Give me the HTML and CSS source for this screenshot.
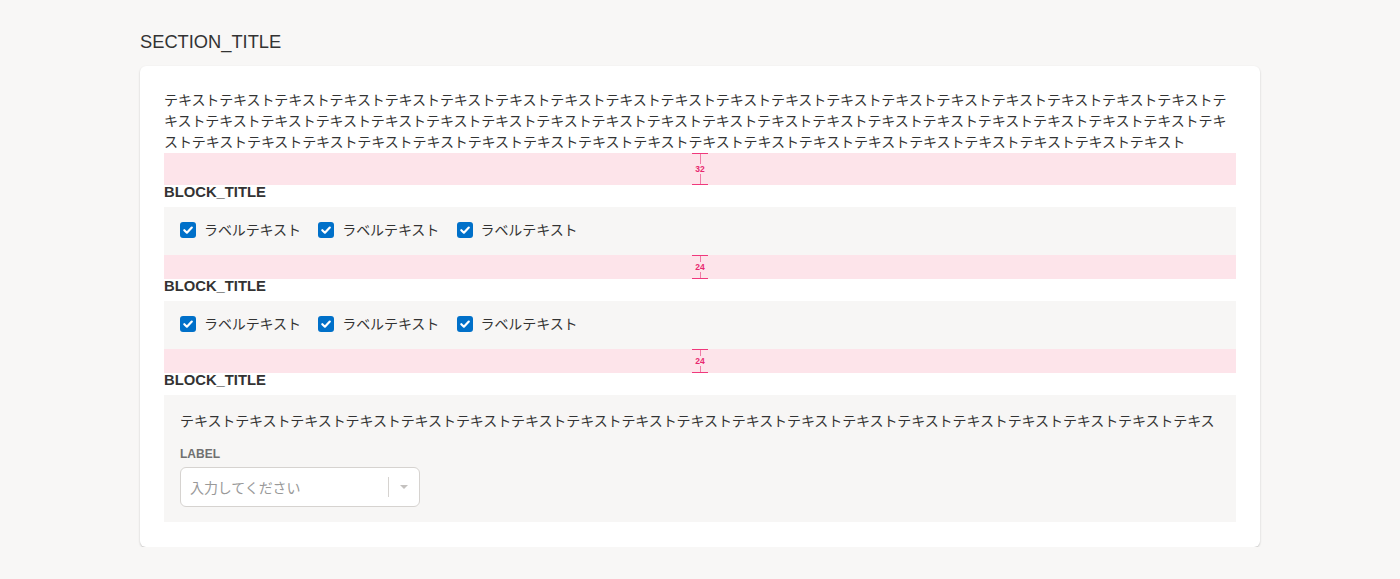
FILE: index.html
```html
<!DOCTYPE html>
<html lang="ja">
<head>
<meta charset="utf-8">
<link rel="stylesheet" href="styles.css">
</head>
<body>
<div class="page">
  <h2 class="section-title">SECTION_TITLE</h2>
  <div class="card">
    <p class="lead">テキストテキストテキストテキストテキストテキストテキストテキストテキストテキストテキストテキストテキストテキストテキストテキストテキストテキストテキストテキストテキストテキストテキストテキストテキストテキストテキストテキストテキストテキストテキストテキストテキストテキストテキストテキストテキストテキストテキストテキストテキストテキストテキストテキストテキストテキストテキストテキストテキストテキストテキストテキストテキストテキストテキストテキストテキスト</p>

    <div class="spacer s32"><div class="marker"><span class="cap"></span><span class="line"></span><span class="num">32</span><span class="line"></span><span class="cap"></span></div></div>
    <h3 class="block-title">BLOCK_TITLE</h3>
    <div class="block checks-block">
      <div class="checks">
        <label class="check"><span class="box"><svg viewBox="0 0 16 16" width="16" height="16"><path d="M4.3 8.2 L6.9 10.7 L11.8 5.6" fill="none" stroke="#fff" stroke-width="2.2" stroke-linecap="round" stroke-linejoin="round"/></svg></span><span class="ltext">ラベルテキスト</span></label>
        <label class="check"><span class="box"><svg viewBox="0 0 16 16" width="16" height="16"><path d="M4.3 8.2 L6.9 10.7 L11.8 5.6" fill="none" stroke="#fff" stroke-width="2.2" stroke-linecap="round" stroke-linejoin="round"/></svg></span><span class="ltext">ラベルテキスト</span></label>
        <label class="check"><span class="box"><svg viewBox="0 0 16 16" width="16" height="16"><path d="M4.3 8.2 L6.9 10.7 L11.8 5.6" fill="none" stroke="#fff" stroke-width="2.2" stroke-linecap="round" stroke-linejoin="round"/></svg></span><span class="ltext">ラベルテキスト</span></label>
      </div>
    </div>

    <div class="spacer s24"><div class="marker"><span class="cap"></span><span class="line"></span><span class="num">24</span><span class="line"></span><span class="cap"></span></div></div>
    <h3 class="block-title">BLOCK_TITLE</h3>
    <div class="block checks-block">
      <div class="checks">
        <label class="check"><span class="box"><svg viewBox="0 0 16 16" width="16" height="16"><path d="M4.3 8.2 L6.9 10.7 L11.8 5.6" fill="none" stroke="#fff" stroke-width="2.2" stroke-linecap="round" stroke-linejoin="round"/></svg></span><span class="ltext">ラベルテキスト</span></label>
        <label class="check"><span class="box"><svg viewBox="0 0 16 16" width="16" height="16"><path d="M4.3 8.2 L6.9 10.7 L11.8 5.6" fill="none" stroke="#fff" stroke-width="2.2" stroke-linecap="round" stroke-linejoin="round"/></svg></span><span class="ltext">ラベルテキスト</span></label>
        <label class="check"><span class="box"><svg viewBox="0 0 16 16" width="16" height="16"><path d="M4.3 8.2 L6.9 10.7 L11.8 5.6" fill="none" stroke="#fff" stroke-width="2.2" stroke-linecap="round" stroke-linejoin="round"/></svg></span><span class="ltext">ラベルテキスト</span></label>
      </div>
    </div>

    <div class="spacer s24"><div class="marker"><span class="cap"></span><span class="line"></span><span class="num">24</span><span class="line"></span><span class="cap"></span></div></div>
    <h3 class="block-title">BLOCK_TITLE</h3>
    <div class="block form-block">
      <p class="one-line">テキストテキストテキストテキストテキストテキストテキストテキストテキストテキストテキストテキストテキストテキストテキストテキストテキストテキストテキス</p>
      <div class="field">
        <div class="field-label">LABEL</div>
        <div class="select">
          <span class="placeholder">入力してください</span>
          <span class="divider"></span>
          <span class="arrow"></span>
        </div>
      </div>
    </div>
  </div>
</div>
</body>
</html>
```

FILE: styles.css
```css
* { box-sizing: border-box; }
html, body {
  margin: 0;
  padding: 0;
  background: #f8f7f6;
}
body {
  font-family: "Liberation Sans", "Noto Sans CJK JP", sans-serif;
  color: #333;
}
.page {
  width: 1120px;
  margin: 0 auto;
  padding-top: 28px;
}
.section-title {
  margin: 0 0 11px;
  font-size: 18.3px;
  font-weight: normal;
  line-height: 27px;
  color: #333;
}
.card {
  background: #fff;
  border-radius: 6px;
  box-shadow: 0 1px 2px rgba(0, 0, 0, 0.22);
  padding: 24px 24px 25px;
}
.lead {
  margin: 0;
  font-size: 14px;
  line-height: 21px;
  letter-spacing: -0.1px;
  word-break: break-all;
  color: #333;
}
.spacer {
  background: #fde4ea;
  display: flex;
  justify-content: center;
}
.s32 { height: 32px; }
.s24 { height: 24px; }
.marker {
  width: 16px;
  display: flex;
  flex-direction: column;
  align-items: center;
  height: 100%;
}
.cap {
  width: 16px;
  height: 1px;
  background: #f0387c;
  flex: none;
}
.line {
  width: 1px;
  flex: 1;
  background: #f07aa6;
}
.num {
  flex: none;
  font-size: 8.5px;
  line-height: 10px;
  font-weight: bold;
  color: #e8286f;
  font-family: "Liberation Sans", sans-serif;
}
.block-title {
  margin: 0 0 7px;
  font-size: 14.8px;
  line-height: 15px;
  font-weight: bold;
  color: #333;
}
.block {
  background: #f7f6f5;
}
.checks-block {
  padding: 15px 16px 17px;
}
.form-block {
  padding: 16px 16px 15px;
}
.checks {
  display: flex;
  align-items: center;
}
.check {
  display: flex;
  align-items: center;
  margin-right: 17.4px;
  height: 16px;
}
.box {
  width: 16px;
  height: 16px;
  background: #0070c9;
  border-radius: 3px;
  display: block;
  margin-right: 8px;
  flex: none;
}
.box svg { display: block; }
.ltext {
  font-size: 14px;
  line-height: 21px;
  letter-spacing: -0.1px;
  color: #333;
}
.one-line {
  margin: 0;
  font-size: 14px;
  line-height: 21px;
  letter-spacing: -0.1px;
  white-space: nowrap;
  color: #333;
}
.field {
  margin-top: 13px;
}
.field-label {
  font-size: 12px;
  line-height: 18px;
  font-weight: bold;
  color: #707070;
  margin-bottom: 4px;
}
.select {
  width: 240px;
  height: 40px;
  background: #fff;
  border: 1px solid #d6d3d0;
  border-radius: 6px;
  display: flex;
  align-items: center;
  padding: 0 0 0 9px;
}
.placeholder {
  flex: 1;
  font-size: 14px;
  letter-spacing: -0.1px;
  color: #999;
}
.divider {
  width: 1px;
  height: 20px;
  background: #d6d3d0;
  margin-right: 11px;
}
.arrow {
  width: 0;
  height: 0;
  border-left: 4px solid transparent;
  border-right: 4px solid transparent;
  border-top: 4px solid #c4c1bf;
  margin-right: 11px;
}
```
